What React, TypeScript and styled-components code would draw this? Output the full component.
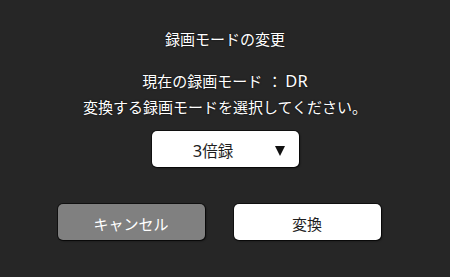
import React from "react";
import styled, { createGlobalStyle } from "styled-components";

const GlobalStyle = createGlobalStyle`
  html, body {
    margin: 0;
    padding: 0;
    background: #262626;
  }
  body {
    font-family: "Noto Sans CJK JP", "Noto Sans", sans-serif;
  }
`;

const Dialog = styled.div`
  width: 450px;
  height: 277px;
  box-sizing: border-box;
  padding-top: 28px;
  display: flex;
  flex-direction: column;
  align-items: center;
  background: #262626;
  color: #ffffff;
`;

const Title = styled.div`
  font-size: 15px;
  line-height: 22px;
  text-shadow: 0 0 2px rgba(0, 0, 0, 0.8);
`;

const Message = styled.div`
  margin-top: 18px;
  display: flex;
  flex-direction: column;
  align-items: center;
  font-size: 15px;
  line-height: 26px;
  text-shadow: 0 0 2px rgba(0, 0, 0, 0.8);
`;

const Line = styled.span`
  display: flex;
  align-items: baseline;
`;

const Latin = styled.span`
  font-family: "Noto Sans", "Open Sans", sans-serif;
  font-size: 16.5px;
`;

const Sep = styled.span`
  margin: 0 3px 0 5px;
`;

const Select = styled.div`
  margin-top: 11px;
  width: 147px;
  height: 36px;
  box-sizing: border-box;
  padding: 3px 14px 0 0;
  display: flex;
  align-items: center;
  background: #ffffff;
  color: #1e1e1e;
  border-radius: 5px;
  box-shadow: 0 0 0 1px rgba(0, 0, 0, 0.55), 1px 1px 2px rgba(0, 0, 0, 0.6);
`;

const SelectLabel = styled.span`
  flex: 1;
  text-align: center;
  font-size: 15.5px;
  line-height: 20px;
`;

const Arrow = styled.svg`
  width: 10px;
  height: 10px;
  display: block;
`;

const ButtonRow = styled.div`
  margin-top: 37px;
  padding-right: 12px;
  display: flex;
  gap: 29px;
`;

const Button = styled.div<{ $primary?: boolean }>`
  width: 147px;
  height: 36px;
  box-sizing: border-box;
  padding-top: 4px;
  display: flex;
  align-items: center;
  justify-content: center;
  border-radius: 5px;
  font-size: 15px;
  line-height: 20px;
  background: ${(p) => (p.$primary ? "#ffffff" : "#808080")};
  color: ${(p) => (p.$primary ? "#1e1e1e" : "#ffffff")};
  box-shadow: 0 0 0 1px rgba(0, 0, 0, 0.55), 1px 1px 2px rgba(0, 0, 0, 0.6);
`;

export default function App() {
  return (
    <>
      <GlobalStyle />
      <Dialog>
        <Title>録画モードの変更</Title>
        <Message>
          <Line>
            現在の録画モード<Sep>：</Sep>
            <Latin>DR</Latin>
          </Line>
          <Line>変換する録画モードを選択してください。</Line>
        </Message>
        <Select>
          <SelectLabel>
            <Latin>3</Latin>倍録
          </SelectLabel>
          <Arrow viewBox="0 0 10 10">
            <polygon points="0,0 10,0 5,10" fill="#111" />
          </Arrow>
        </Select>
        <ButtonRow>
          <Button>キャンセル</Button>
          <Button $primary>変換</Button>
        </ButtonRow>
      </Dialog>
    </>
  );
}
